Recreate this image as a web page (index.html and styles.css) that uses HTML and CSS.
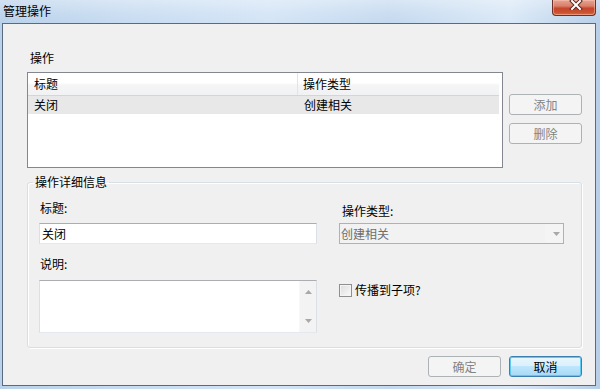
FILE: index.html
```html
<!DOCTYPE html>
<html lang="zh-CN">
<head>
<meta charset="utf-8">
<title>管理操作</title>
<link rel="stylesheet" href="styles.css">
</head>
<body>
<div class="window">
  <div class="titlebar">
    <span class="title">管理操作</span>
    <button class="close" aria-label="关闭">
      <svg width="14" height="10" viewBox="0 0 14 10">
        <path d="M3 1 L11 9 M11 1 L3 9" stroke="#5a2a22" stroke-width="4" stroke-linecap="square" fill="none"/>
        <path d="M3 1 L11 9 M11 1 L3 9" stroke="#ffffff" stroke-width="2" stroke-linecap="square" fill="none"/>
      </svg>
    </button>
  </div>
  <div class="client">
    <div class="section-label">操作</div>
    <div class="list-row">
      <div class="listview">
        <div class="lv-header">
          <div class="lv-col c1">标题</div>
          <div class="lv-col c2">操作类型</div>
        </div>
        <div class="lv-item selected">
          <div class="lv-cell c1">关闭</div>
          <div class="lv-cell c2">创建相关</div>
        </div>
      </div>
      <div class="side-buttons">
        <button class="btn" disabled>添加</button>
        <button class="btn" disabled>删除</button>
      </div>
    </div>
    <fieldset class="group">
      <legend>操作详细信息</legend>
      <div class="group-body">
        <div class="lbl">标题:</div>
        <div class="lbl lbl-type">操作类型:</div>
        <div class="textbox">关闭</div>
        <div class="combo">
          <span class="combo-text">创建相关</span>
          <svg class="combo-arrow" width="7" height="4" viewBox="0 0 7 4"><path d="M0 0 H7 L3.5 4 Z" fill="#a8a8a8"/></svg>
        </div>
        <div class="lbl lbl-desc">说明:</div>
        <div class="spacer"></div>
        <div class="textarea">
          <div class="ta-text"></div>
          <div class="vscroll">
            <svg width="7" height="4" viewBox="0 0 7 4"><path d="M0 4 H7 L3.5 0 Z" fill="#a8a8a8"/></svg>
            <svg width="7" height="4" viewBox="0 0 7 4"><path d="M0 0 H7 L3.5 4 Z" fill="#a8a8a8"/></svg>
          </div>
        </div>
        <label class="check"><span class="box"></span><span>传播到子项?</span></label>
      </div>
    </fieldset>
    <div class="footer">
      <button class="btn" disabled>确定</button>
      <button class="btn default">取消</button>
    </div>
  </div>
</div>
</body>
</html>
```

FILE: styles.css
```css
html, body {
  margin: 0;
  padding: 0;
}
body {
  font-family: "Noto Sans CJK SC", "Noto Sans", sans-serif;
  font-size: 12px;
  color: #000;
  width: 600px;
  height: 389px;
  overflow: hidden;
}
.window {
  width: 600px;
  height: 389px;
  display: flex;
  flex-direction: column;
  background: linear-gradient(90deg, #b9d1ea 0%, #c6dbf1 20%, #d3e4f6 45%, #c4d9ef 65%, #d9e8f7 85%, #b7cfe8 100%);
}
.titlebar {
  height: 23px;
  display: flex;
  align-items: flex-start;
  background: linear-gradient(180deg, rgba(255,255,255,0.35) 0%, rgba(255,255,255,0.1) 60%, rgba(255,255,255,0) 100%);
}
.title {
  padding-left: 3px;
  line-height: 21px;
  color: #000;
}
.close {
  margin-left: auto;
  margin-right: 4px;
  width: 44px;
  height: 16px;
  padding: 0;
  border: 1px solid #6b3128;
  border-top: none;
  border-radius: 0 0 4px 4px;
  background: linear-gradient(180deg, #e6a596 0%, #d98069 40%, #c6452c 55%, #c9502f 80%, #d56a45 100%);
  box-shadow: inset 0 0 0 1px rgba(255, 200, 180, 0.5);
  display: flex;
  align-items: flex-start;
  justify-content: center;
}
.close svg {
  display: block;
  margin-left: 4px;
}
.client {
  flex: 1;
  margin: 0 4px 3px 2px;
  border: 1px solid #5b6b7e;
  background: #f0f0f0;
  padding: 26px 13px 0 24px;
}
.section-label {
  line-height: 16px;
  padding-left: 3px;
}
.list-row {
  margin-top: 6px;
  display: flex;
  gap: 6px;
  align-items: flex-start;
}
.listview {
  width: 476px;
  height: 96px;
  box-sizing: border-box;
  border: 1px solid #828790;
  background: #fff;
}
.lv-header {
  display: flex;
  height: 22px;
  border-bottom: 1px solid #d5d5d5;
  background: linear-gradient(180deg, #ffffff 0%, #ffffff 45%, #f5f5f6 55%, #f1f2f4 100%);
  width: 471px;
}
.lv-col {
  line-height: 22px;
  box-sizing: border-box;
}
.c1 {
  width: 270px;
  padding-left: 6px;
}
.c2 {
  width: 201px;
  padding-left: 5px;
}
.lv-header .c1 {
  border-right: 1px solid #e3e4e6;
}
.lv-item {
  display: flex;
  width: 471px;
  height: 18px;
}
.lv-item.selected {
  background: #e8e8e8;
}
.lv-cell {
  line-height: 18px;
  box-sizing: border-box;
}
.lv-item .c2 {
  padding-left: 6px;
}
.side-buttons {
  margin-top: 22px;
  display: flex;
  flex-direction: column;
  gap: 8px;
}
.btn {
  width: 73px;
  height: 21px;
  padding: 0;
  font-family: inherit;
  font-size: 12px;
  line-height: 19px;
  border: 1px solid #707070;
  border-radius: 3px;
  background: linear-gradient(180deg, #f2f2f2 0%, #ebebeb 50%, #dddddd 50%, #cfcfcf 100%);
  color: #000;
}
.btn:disabled {
  border-color: #adb2b5;
  background: #f4f4f4;
  color: #838383;
}
.btn.default {
  border-color: #3c7fb1;
  background: linear-gradient(180deg, #eaf6fd 0%, #d9f0fc 50%, #bee6fd 50%, #a7d9f5 100%);
  box-shadow: inset 0 0 0 1px #5fc8f5;
}
.group {
  margin: 6px 0 0 0;
  padding: 0;
  width: 555px;
  box-sizing: border-box;
  border: 1px solid #d5dfe5;
  border-radius: 3px;
  box-shadow: 1px 1px 0 #ffffff, inset 1px 1px 0 #ffffff;
}
.group legend {
  margin-left: 5px;
  padding: 0 2px;
  line-height: 16px;
}
.group-body {
  padding: 10px 17px 14px 11px;
  display: grid;
  grid-template-columns: 278px 225px;
  column-gap: 22px;
  align-items: start;
}
.lbl {
  line-height: 16px;
  padding-left: 1px;
}
.lbl-type {
  padding-top: 3px;
  margin-bottom: -3px;
  padding-left: 3px;
}
.lbl-desc {
  margin-top: 12px;
}
.textbox {
  margin-top: 7px;
  height: 21px;
  box-sizing: border-box;
  background: #fff;
  border: 1px solid #dbdfe6;
  border-top-color: #abadb3;
  border-bottom-color: #e3e9ef;
  padding-left: 2px;
  line-height: 19px;
}
.combo {
  margin-top: 7px;
  height: 21px;
  box-sizing: border-box;
  border: 1px solid #adb2b5;
  background: #f4f4f4;
  display: flex;
  align-items: center;
}
.combo-text {
  flex: 0 0 204px;
  height: 19px;
  line-height: 19px;
  padding-left: 1px;
  color: #6d6d6d;
  background: #f2f2f2;
}
.combo-arrow {
  margin-left: 8px;
}
.textarea {
  margin-top: 8px;
  height: 53px;
  box-sizing: border-box;
  background: #fff;
  border: 1px solid #dbdfe6;
  border-top-color: #abadb3;
  border-bottom-color: #e3e9ef;
  display: flex;
}
.ta-text {
  flex: 1;
}
.vscroll {
  width: 17px;
  background: #f3f3f3;
  border-left: 1px solid #f8f8f8;
  display: flex;
  flex-direction: column;
  align-items: center;
  justify-content: space-between;
  padding: 9px 0 9px;
  box-sizing: border-box;
}
.vscroll svg {
  display: block;
}
.check {
  margin-top: 10px;
  display: flex;
  align-items: center;
  gap: 3px;
  line-height: 16px;
}
.box {
  width: 13px;
  height: 13px;
  box-sizing: border-box;
  border: 1px solid #8e8f8f;
  background: linear-gradient(135deg, #dcdcdc 0%, #eeeeee 60%, #fafafa 100%);
  box-shadow: inset 0 0 0 1px #f4f4f4;
}
.footer {
  margin-top: 8px;
  display: flex;
  justify-content: flex-end;
  gap: 8px;
}
```
